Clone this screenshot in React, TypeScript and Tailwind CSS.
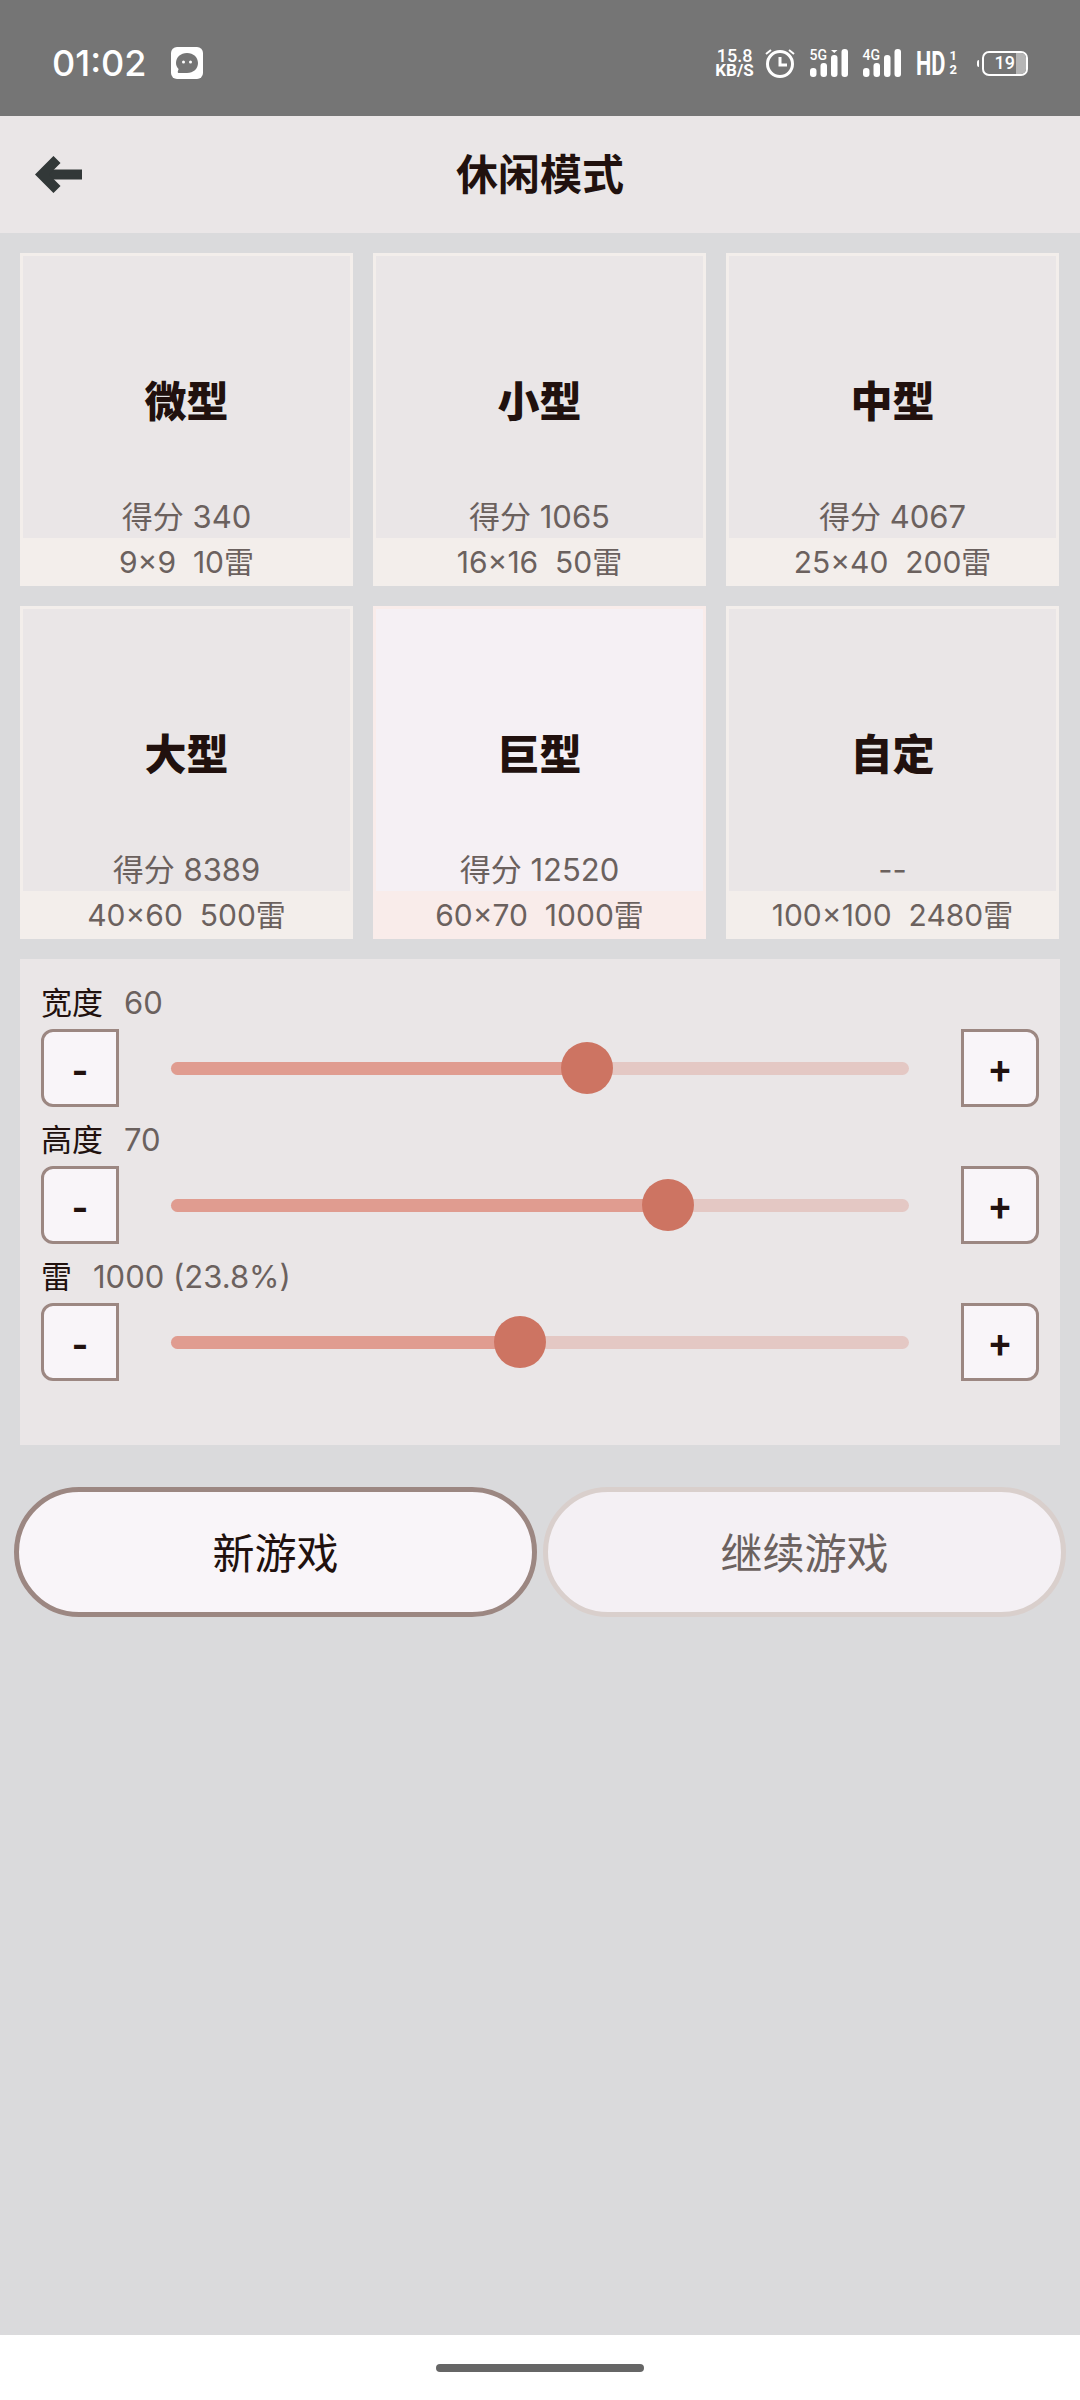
const cards = [
  { name: '微型', score: '得分 340', size: '9×9  10雷' },
  { name: '小型', score: '得分 1065', size: '16×16  50雷' },
  { name: '中型', score: '得分 4067', size: '25×40  200雷' },
  { name: '大型', score: '得分 8389', size: '40×60  500雷' },
  { name: '巨型', score: '得分 12520', size: '60×70  1000雷', active: true },
  { name: '自定', score: '--', size: '100×100  2480雷' },
];

const sliders = [
  { label: '宽度', value: '60', percent: 56.4 },
  { label: '高度', value: '70', percent: 67.3 },
  { label: '雷', value: '1000 (23.8%)', percent: 47.3 },
];

const fontCn = "font-['Inter','Noto_Sans_CJK_SC',sans-serif]";

function Signal({ tag, notch }: { tag: string; notch?: boolean }) {
  return (
    <div className="relative h-[28px] w-[38px]">
      <span className="absolute left-0 top-[-1px] text-[14px] leading-[14px] font-medium text-white font-['Roboto',sans-serif]">
        {tag}
      </span>
      <svg width="38" height="28" viewBox="0 0 38 28" className="absolute left-0 top-0" fill="#fff">
        <rect x="0" y="19" width="6.500" height="9" rx="3" />
        <rect x="10.500" y="14" width="6.500" height="14" rx="3" />
        <rect x="21" y="6" width="6.500" height="22" rx="3" />
        <rect x="31.500" y="0" width="6.500" height="28" rx="3" />
        {notch && <path d="M21 1h6.500l-3.250 3z" />}
      </svg>
    </div>
  );
}

function StatusBar() {
  return (
    <div className="flex h-[116px] items-center justify-between bg-[#757575] pl-[52px] pr-[52px] pt-[10px] text-white">
      <div className="flex items-center gap-[24px]">
        <span className="text-[36px] leading-none font-medium font-['Inter',sans-serif]">01:02</span>
        <svg width="32" height="32" viewBox="0 0 32 32">
          <rect width="32" height="32" rx="6" fill="#fff" />
          <path d="M16 6c6.400 0 11 4.200 11 10s-4.600 10-11 10H8c-1 0-1.500-.8-1.200-1.600l.8-2.400C6 20.300 5 18.300 5 16 5 10.200 9.600 6 16 6z" fill="#757575" />
          <circle cx="12.500" cy="15" r="1.500" fill="#fff" />
          <circle cx="19.500" cy="15" r="1.500" fill="#fff" />
        </svg>
      </div>
      <div className="flex items-center">
        <div className="flex w-[44px] flex-col items-center font-['Roboto',sans-serif]">
          <span className="text-[18px] leading-[15px] font-medium">15.8</span>
          <span className="text-[17px] leading-[15px] font-bold">KB/S</span>
        </div>
        <svg width="32" height="32" viewBox="0 0 32 32" fill="none" stroke="#fff" className="ml-[7px]">
          <circle cx="16" cy="17" r="12.500" strokeWidth="3" />
          <path d="M16 10v8h7" strokeWidth="3" />
          <path d="M2 7l5-4M30 7l-5-4" strokeWidth="2" />
        </svg>
        <div className="ml-[14px]">
          <Signal tag="5G" notch />
        </div>
        <div className="ml-[15px]">
          <Signal tag="4G" />
        </div>
        <div className="ml-[15px] flex items-center">
          <span className="w-[34px] origin-left scale-x-[0.64] text-[34px] leading-none font-bold font-['Roboto',sans-serif]">
            HD
          </span>
          <div className="flex flex-col items-center text-[13px] leading-[14px] font-bold font-['Roboto',sans-serif]">
            <span>1</span>
            <span>2</span>
          </div>
        </div>
        <div className="ml-[20px] flex items-center">
          <div className="h-[7px] w-[2px] rounded-l-full bg-white" />
          <div className="relative ml-[3px] flex h-[25px] w-[46px] items-center justify-end overflow-hidden rounded-[7px] border-[2px] border-white">
            <div className="absolute bottom-0 right-0 top-0 w-[10px] bg-[#b5b5b5]" />
            <span className="relative mr-[11px] text-[18px] leading-none font-medium font-['Roboto',sans-serif]">19</span>
          </div>
        </div>
      </div>
    </div>
  );
}

function AppBar() {
  return (
    <div className="relative flex h-[117px] items-center justify-center bg-[#eae6e7]">
      <svg width="47" height="37" viewBox="0 0 47 37" className="absolute left-[35px] top-[40px]" fill="none" stroke="#323838" strokeWidth="10">
        <path d="M47 18.500H8" />
        <path d="M22 3.500L7 18.500l15 15" />
      </svg>
      <h1 className={`text-[42px] leading-none font-bold text-[#21110e] ${fontCn}`}>休闲模式</h1>
    </div>
  );
}

function StepButton({ sign }: { sign: string }) {
  return (
    <div
      className={`flex h-[78px] w-[78px] shrink-0 items-center justify-center border-[3px] border-[#9c8782] bg-[#f9f5f9] pt-[6px] leading-none font-medium text-[#21110e] font-['Roboto',sans-serif] ${
        sign === '-' ? 'rounded-l-[12px] text-[46px]' : 'rounded-r-[12px] text-[38px]'
      }`}
    >
      {sign}
    </div>
  );
}

export default function App() {
  return (
    <div className={`flex h-[2400px] w-[1080px] flex-col overflow-hidden bg-[#dadadc] ${fontCn}`}>
      <StatusBar />
      <AppBar />

      <div className="grid grid-cols-[333px_333px_333px] gap-5 px-5 pt-5">
        {cards.map((card) => (
          <div
            key={card.name}
            className={`flex h-[333px] flex-col border-[3px] ${
              card.active ? 'border-[#f9ecea] bg-[#f5f0f4]' : 'border-[#f3eeeb] bg-[#eae6e7]'
            }`}
          >
            <div className="flex flex-1 items-center justify-center pt-[53px] text-[42px] leading-none font-black text-[#21110e]">
              {card.name}
            </div>
            <div className="h-[43px] text-center text-[31px] leading-[43px] text-[#6b615e]">{card.score}</div>
            <div
              className={`-mx-[3px] -mb-[3px] h-[48px] text-center text-[30px] leading-[48px] whitespace-pre text-[#6b615e] ${
                card.active ? 'bg-[#f9ecea]' : 'bg-[#f3eeeb]'
              }`}
            >
              {card.size}
            </div>
          </div>
        ))}
      </div>

      <div className="mx-5 mt-5 flex h-[486px] flex-col bg-[#eae6e7] px-[21px] pt-[21px]">
        {sliders.map((slider) => (
          <div key={slider.label} className="mb-[10px]">
            <div className="flex h-[43px] items-center gap-[21px] pt-[2px] text-[31px] leading-none">
              <span className="text-[#21110e]">{slider.label}</span>
              <span className="text-[#6b615e]">{slider.value}</span>
            </div>
            <div className="mt-[6px] flex items-center">
              <StepButton sign="-" />
              <div className="relative mx-[52px] h-[13px] flex-1 rounded-full bg-[#e4c8c4]">
                <div className="h-full rounded-full bg-[#e09c90]" style={{ width: `${slider.percent}%` }} />
                <div
                  className="absolute top-1/2 h-[52px] w-[52px] -translate-x-1/2 -translate-y-1/2 rounded-full bg-[#cd7462]"
                  style={{ left: `${slider.percent}%` }}
                />
              </div>
              <StepButton sign="+" />
            </div>
          </div>
        ))}
      </div>

      <div className="mt-[42px] flex gap-[6px] px-[14px]">
        <div className="flex h-[130px] flex-1 items-center justify-center rounded-full border-[5px] border-[#9c8782] bg-[#f9f5f9] pt-[2px] text-[42px] text-[#21110e]">
          新游戏
        </div>
        <div className="flex h-[130px] flex-1 items-center justify-center rounded-full border-[5px] border-[#d9cfcc] bg-[#f4f0f4] pt-[2px] text-[42px] text-[#6b615e]">
          继续游戏
        </div>
      </div>

      <div className="mt-auto flex h-[65px] items-center justify-center bg-white">
        <div className="h-[8px] w-[208px] rounded-full bg-[#666666]" />
      </div>
    </div>
  );
}
